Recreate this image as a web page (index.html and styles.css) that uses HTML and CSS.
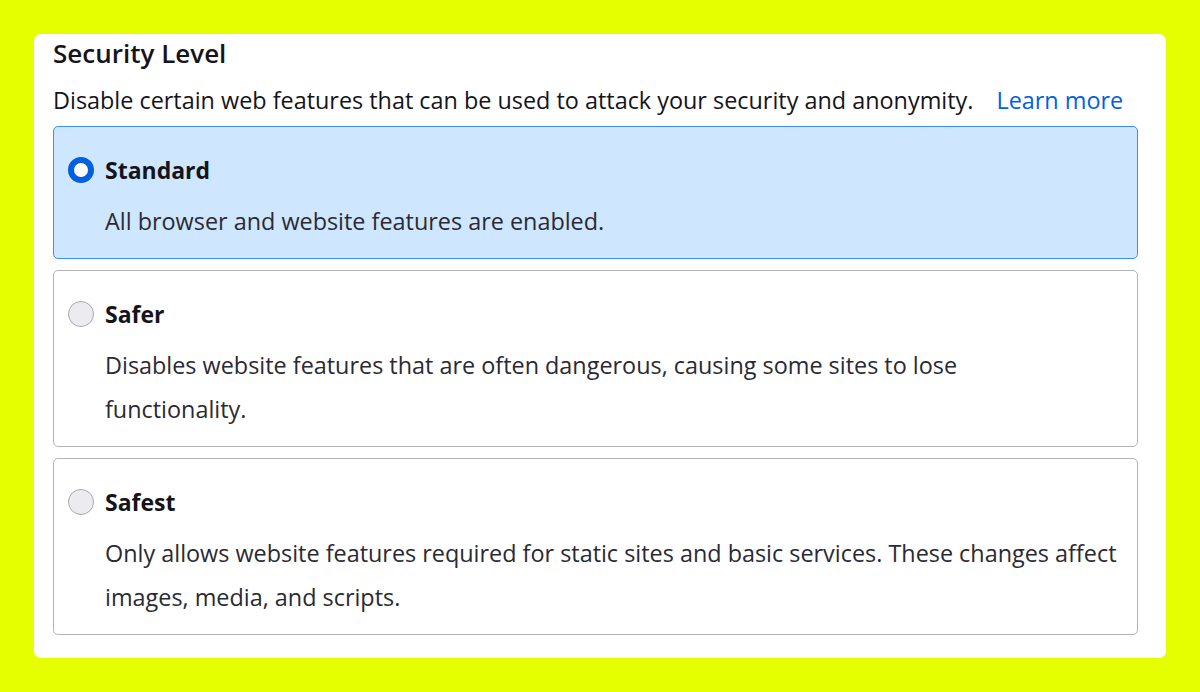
FILE: index.html
```html
<!DOCTYPE html>
<html>
<head>
<meta charset="utf-8">
<link rel="stylesheet" href="styles.css">
</head>
<body>
<div class="card">
  <h1 class="title">Security Level</h1>
  <p class="intro">Disable certain web features that can be used to attack your security and anonymity. <a class="link" href="#">Learn more</a></p>
  <div class="options">
    <div class="option selected">
      <div class="head"><span class="radio on"></span><span class="label">Standard</span></div>
      <p class="desc">All browser and website features are enabled.</p>
    </div>
    <div class="option">
      <div class="head"><span class="radio"></span><span class="label">Safer</span></div>
      <p class="desc">Disables website features that are often dangerous, causing some sites to lose<br>functionality.</p>
    </div>
    <div class="option">
      <div class="head"><span class="radio"></span><span class="label">Safest</span></div>
      <p class="desc">Only allows website features required for static sites and basic services. These changes affect images, media, and scripts.</p>
    </div>
  </div>
</div>
</body>
</html>
```

FILE: styles.css
```css
html, body {
  margin: 0;
  padding: 0;
  background: #e5ff00;
}
body {
  padding: 34px;
  font-family: "Open Sans", "Noto Sans", sans-serif;
  color: #15141a;
}
.card {
  background: #ffffff;
  border-radius: 7px;
  height: 624px;
  box-sizing: border-box;
  padding: 1px 28px 0 19px;
}
.title {
  margin: 0;
  font-size: 26px;
  font-weight: 600;
  line-height: 36px;
}
.intro {
  margin: 14px 0 0 0;
  font-size: 23.4px;
  line-height: 30px;
  white-space: nowrap;
}
.link {
  color: #0061e0;
  text-decoration: none;
  margin-left: 17px;
}
.options {
  display: flex;
  flex-direction: column;
  gap: 11px;
  margin-top: 11px;
}
.option {
  border: 1px solid #b4b4b8;
  border-radius: 5px;
  padding: 19px 16px 15px 14px;
}
.option.selected {
  background: #cfe6ff;
  border-color: #3d8ff5;
}
.head {
  display: flex;
  align-items: center;
  gap: 11px;
  height: 48px;
}
.radio {
  width: 26px;
  height: 26px;
  box-sizing: border-box;
  border-radius: 50%;
  border: 1.5px solid #a8a8b0;
  background: #ececf0;
  flex: none;
}
.radio.on {
  border: 6px solid #0060df;
  background: #ffffff;
}
.label {
  font-size: 23px;
  font-weight: 700;
}
.desc {
  margin: 5px 0 0 37px;
  font-size: 23.4px;
  line-height: 44px;
  color: #2b2a33;
}
```
